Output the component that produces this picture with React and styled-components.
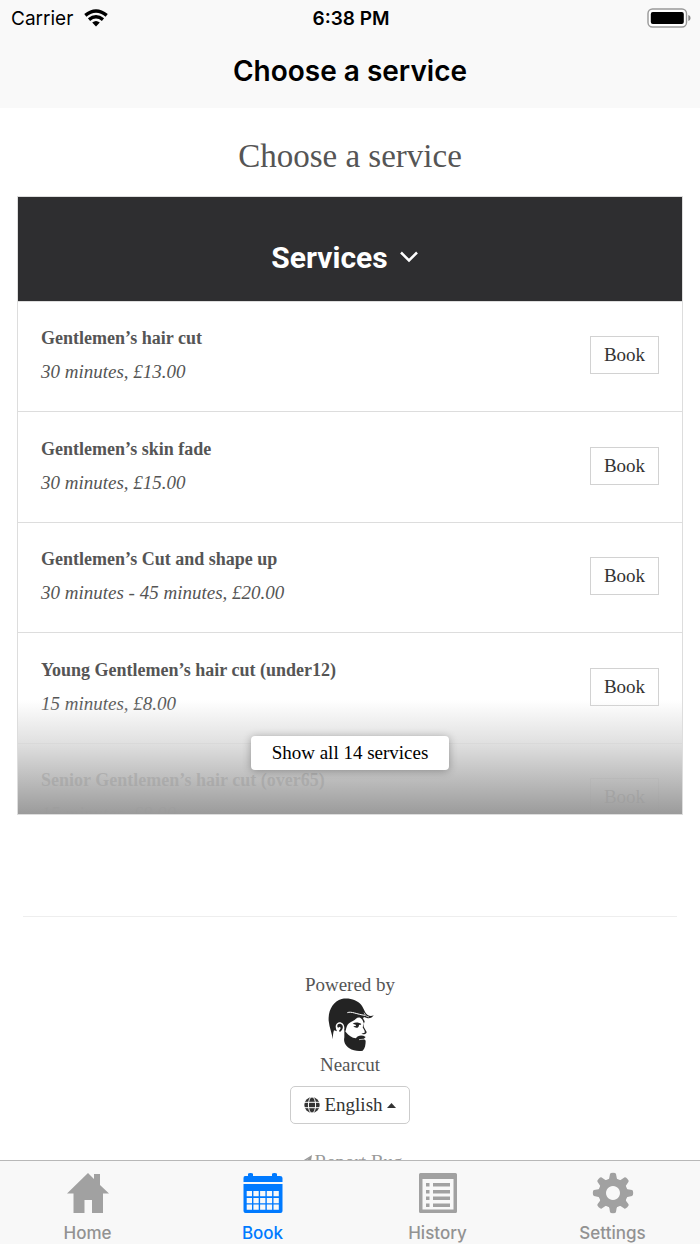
import React from 'react'
import styled, { createGlobalStyle } from 'styled-components';

const GlobalStyle = createGlobalStyle`
    * {
        box-sizing: border-box;
    }
    body {
        margin: 0;
        background: #fff;
        color: #555;
        font-family: "Liberation Serif", serif;
    }
    button, a {
        font-family: inherit;
    }
`;
const Screen = styled.div`
    display: flex;
    flex-direction: column;
    height: 100vh;
`;
const TopBar = styled.header`
    flex: none;
    background: #f9f9f9;
    color: #000;
    font-family: Inter, sans-serif;
`;
const StatusBar = styled.div`
    display: grid;
    grid-template-columns: 1fr auto 1fr;
    align-items: center;
    height: 36px;
    padding: 0 9px 0 11px;
    font-size: 19px;
`;
const Carrier = styled.div`
    display: flex;
    align-items: center;
    gap: 11px;
`;
const Clock = styled.div`
    font-weight: 600;
`;
const Battery = styled.svg`
    justify-self: end;
`;
const NavTitle = styled.div`
    height: 72px;
    line-height: 70px;
    text-align: center;
    font-size: 28px;
    font-weight: 600;
`;
const Content = styled.main`
    flex: 1;
    min-height: 0;
    overflow-y: auto;
    scrollbar-width: none;
    padding: 0 17px;
`;
const Heading = styled.h1`
    margin: 0;
    padding: 28px 0 20px;
    text-align: center;
    font-size: 33px;
    font-weight: 400;
    line-height: 40px;
`;
const Panel = styled.section`
    position: relative;
    height: 619px;
    overflow: hidden;
    border: 1px solid #ddd;
`;
const PanelHeader = styled.button`
    display: flex;
    align-items: center;
    justify-content: center;
    gap: 12px;
    width: 100%;
    height: 104px;
    padding: 16px 11px 0 0;
    border: 0;
    background: #2e2e30;
    color: #fff;
    font-family: Roboto, sans-serif;
    font-size: 30px;
    font-weight: 700;
`;
const ServiceList = styled.ul`
    margin: 0;
    padding: 0;
    list-style: none;
`;
const ServiceRow = styled.li`
    display: flex;
    align-items: center;
    justify-content: space-between;
    height: 110px;
    padding: 0 23px 3px;
    border-top: 1px solid #ddd;
    &:nth-child(even) {
        height: 111px;
    }
`;
const ServiceName = styled.div`
    font-size: 18px;
    font-weight: 700;
    line-height: 34px;
`;
const ServiceDetail = styled.div`
    font-size: 19px;
    font-style: italic;
    line-height: 34px;
`;
const BookButton = styled.button`
    width: 69px;
    height: 38px;
    padding: 0;
    border: 1px solid #d2d2d2;
    background: #fff;
    color: #333;
    font-size: 19px;
`;
const Fade = styled.div`
    position: absolute;
    inset: auto 0 0;
    display: flex;
    justify-content: center;
    align-items: flex-start;
    height: 114px;
    padding-top: 36px;
    background: linear-gradient(rgba(255, 255, 255, 0), rgba(216, 216, 216, 0.8) 38%, #9b9b9b);
`;
const ShowAll = styled.button`
    width: 198px;
    height: 34px;
    padding: 0;
    border: 0;
    border-radius: 4px;
    background: #fff;
    box-shadow: 0 1px 8px rgba(0, 0, 0, 0.3);
    color: #000;
    font-size: 19px;
`;
const Divider = styled.hr`
    margin: 101px 6px 55px;
    border: 0;
    border-top: 1px solid #eee;
`;
const Footer = styled.footer`
    display: flex;
    flex-direction: column;
    align-items: center;
    font-size: 19px;
    line-height: 26px;
`;
const Language = styled.button`
    display: flex;
    align-items: center;
    justify-content: center;
    gap: 4px;
    width: 120px;
    height: 38px;
    margin: 8px 0 28px;
    padding: 0;
    border: 1px solid #ccc;
    border-radius: 5px;
    background: #fff;
    color: #333;
    font-size: 19px;
`;
const ReportLink = styled.a`
    display: flex;
    align-items: center;
    gap: 2px;
    color: #999;
    font-size: 19px;
    line-height: 20px;
    text-decoration: none;
`;
const TabBar = styled.nav`
    flex: none;
    display: grid;
    grid-template-columns: repeat(4, 1fr);
    height: 84px;
    border-top: 1px solid #b8b8b8;
    background: #f8f8f8;
    font-family: Inter, sans-serif;
`;
const Tab = styled.a`
    display: flex;
    flex-direction: column;
    align-items: center;
    gap: 7px;
    padding-top: 11px;
    color: ${(props) => (props.$active ? '#007aff' : '#929292')};
    font-size: 17px;
    font-weight: 500;
    line-height: 24px;
    text-decoration: none;
    svg {
        fill: ${(props) => (props.$active ? '#007aff' : '#a1a1a1')};
    }
`;

const services = [
    { name: 'Gentlemen’s hair cut', detail: '30 minutes, £13.00' },
    { name: 'Gentlemen’s skin fade', detail: '30 minutes, £15.00' },
    { name: 'Gentlemen’s Cut and shape up', detail: '30 minutes - 45 minutes, £20.00' },
    { name: 'Young Gentlemen’s hair cut (under12)', detail: '15 minutes, £8.00' },
    { name: 'Senior Gentlemen’s hair cut (over65)', detail: '15 minutes, £8.00' },
];

const WifiIcon = () => (
    <svg width="24" height="18" viewBox="0 0 24 18" fill="none" stroke="#000" strokeWidth="3.4">
        <path d="M1.300 6.300 Q12-2.300 22.700 6.300" />
        <path d="M5 10.600 Q12 4.800 19 10.600" />
        <path d="M8.200 13.600 Q12 10.400 15.800 13.600 L12 17.400Z" fill="#000" stroke="none" />
    </svg>
);

const BatteryIcon = () => (
    <Battery width="44" height="20" viewBox="0 0 44 20">
        <rect x="1" y="1" width="38.5" height="18" rx="4.5" fill="#fff" stroke="#999" strokeWidth="1.4" />
        <rect x="3.8" y="4" width="33" height="12" rx="2" fill="#000" />
        <path d="M41.3 7 Q43.6 7.5 43.6 10 Q43.6 12.5 41.3 13Z" fill="#888" />
    </Battery>
);

const NearcutLogo = () => (
    <svg width="48" height="54" viewBox="18 22 144 162" fill="#232323">
        <path d="M38 146 C37 130 28 112 26 90 C24 58 40 32 65 25 C88 20 112 29 124 43 C133 55 133 66 143 73 C149 77 156 76 161 74 C156 81 149 84 141 82 L132 79 L129 83 L134 92 L132 99 L127 87 C120 78 113 80 108 84 C103 90 95 91 87 98 C80 104 79 112 77 121 L72 119 C76 106 69 94 57 95 C45 98 45 111 51 122 L42 119 C39 127 39 136 38 146Z" />
        <path d="M52 108 C50 99 61 96 67 104 C71 110 67 120 60 124 L57 121 L62 113 L60 108 L54 111Z" />
        <path d="M73 117 C79 128 88 136 99 141 L108 143 C113 134 126 132 137 139 L132 144 L137 150 C137 161 135 174 128 180 C118 183 99 181 88 173 C76 165 70 154 73 140Z" />
        <path d="M98 99 C105 94 116 94 124 100 L121 103 L117 102 C118 111 108 115 100 107 L108 106 L107 102Z" />
        <path d="M132 98 L131 108 L140 124 C140 129 135 131 129 131 L124 129 L134 126 L134 121 L128 110Z" />
        <path d="M82 66 C94 61 110 71 135 74" fill="none" stroke="#fff" strokeWidth="3" />
        <path d="M132 66 L138 76 L147 79" fill="none" stroke="#fff" strokeWidth="2" />
        <path d="M117 147 L136 145" stroke="#fff" strokeWidth="2" />
    </svg>
);

const GlobeIcon = () => (
    <svg width="16" height="16" viewBox="0 0 16 16">
        <circle cx="8" cy="8" r="7.7" fill="#333" />
        <g fill="none" stroke="#fff" strokeWidth="1">
            <ellipse cx="8" cy="8" rx="3.6" ry="8.2" />
            <path d="M0 5.3H16M0 10.7H16" />
        </g>
    </svg>
);

const HomeIcon = () => (
    <svg width="42" height="42" viewBox="0 0 42 42">
        <path d="M21 1 L27 7 V2 H33 V13 L42 21.5 H36 V41 H25 V28 H17.5 V41 H6.5 V21.5 H0Z" />
    </svg>
);

const CalendarIcon = () => (
    <svg width="42" height="42" viewBox="0 0 42 42">
        <path d="M3 4 H6 V2 Q6 1 8.5 1 Q11 1 11 2 V4 H30 V2 Q30 1 32.5 1 Q35 1 35 2 V4 H38 Q40.500 4 40.500 6 V10 H1.500 V6 Q1.500 4 3 4Z" />
        <path fillRule="evenodd" d={'M1.500 12 H40.500 V39 Q40.500 41 38.500 41 H3.500 Q1.500 41 1.500 39Z'
            + [19, 26, 32.5].map((y) => [4.7, 11.4, 18.1, 24.8, 31.5].map((x) => `M${x} ${y} h5.300 v5.200 h-5.300z`).join('')).join('')} />
    </svg>
);

const HistoryIcon = () => (
    <svg width="42" height="42" viewBox="0 0 42 42">
        <path fillRule="evenodd" d="M3.500 1 H38.500 Q40 1 40 2.500 V39.500 Q40 41 38.500 41 H3.500 Q2 41 2 39.500 V2.500 Q2 1 3.500 1Z M5.500 7 V37.500 H36.500 V7Z" />
        {[11, 18, 24.5, 31.5].map((y) => (
            <path key={y} d={`M9 ${y} h3.500 v3.500 h-3.500z M16 ${y} h17 v3.500 h-17z`} />
        ))}
    </svg>
);

const GearIcon = () => (
    <svg width="42" height="42" viewBox="0 0 42 42">
        {[0, 45, 90, 135, 180, 225, 270, 315].map((angle) => (
            <path key={angle} transform={`rotate(${angle} 21 21)`} d="M15.500 10 Q17.500 7 18 2 Q18.200 .8 21 .8 Q23.800 .8 24 2 Q24.500 7 26.500 10Z" />
        ))}
        <path fillRule="evenodd" d="M21 6.300 a14.700 14.700 0 1 0 .01 0Z M21 14 a7 7 0 1 1 -.01 0Z" />
    </svg>
);

const tabs = [
    { label: 'Home', icon: <HomeIcon /> },
    { label: 'Book', icon: <CalendarIcon />, active: true },
    { label: 'History', icon: <HistoryIcon /> },
    { label: 'Settings', icon: <GearIcon /> },
];

const App = () => {
    return (
        <Screen>
            <GlobalStyle />
            <TopBar>
                <StatusBar>
                    <Carrier>Carrier <WifiIcon /></Carrier>
                    <Clock>6:38 PM</Clock>
                    <BatteryIcon />
                </StatusBar>
                <NavTitle>Choose a service</NavTitle>
            </TopBar>
            <Content>
                <Heading>Choose a service</Heading>
                <Panel>
                    <PanelHeader>
                        Services
                        <svg width="18" height="12" viewBox="0 0 18 12" fill="none" stroke="#fff" strokeWidth="2.5">
                            <path d="M1 1.500 L9 9.500 L17 1.500" />
                        </svg>
                    </PanelHeader>
                    <ServiceList>
                        {services.map((service) => (
                            <ServiceRow key={service.name}>
                                <div>
                                    <ServiceName>{service.name}</ServiceName>
                                    <ServiceDetail>{service.detail}</ServiceDetail>
                                </div>
                                <BookButton>Book</BookButton>
                            </ServiceRow>
                        ))}
                    </ServiceList>
                    <Fade>
                        <ShowAll>Show all 14 services</ShowAll>
                    </Fade>
                </Panel>
                <Divider />
                <Footer>
                    <div>Powered by</div>
                    <NearcutLogo />
                    <div>Nearcut</div>
                    <Language>
                        <GlobeIcon />
                        English
                        <svg width="9" height="5" viewBox="0 0 9 5"><path d="M0 5 L4.500 0 L9 5Z" fill="#333" /></svg>
                    </Language>
                    <ReportLink href="#report">
                        <svg width="15" height="15" viewBox="0 0 13 13" fill="#999"><path d="M0 8 L13 0 L11 12 L7 10 L5 13 L4 9 L11 2 L3 9Z" /></svg>
                        Report Bug
                    </ReportLink>
                </Footer>
            </Content>
            <TabBar>
                {tabs.map((tab) => (
                    <Tab key={tab.label} href={'#' + tab.label.toLowerCase()} $active={tab.active}>
                        {tab.icon}
                        {tab.label}
                    </Tab>
                ))}
            </TabBar>
        </Screen>
    )
}
export default App;
